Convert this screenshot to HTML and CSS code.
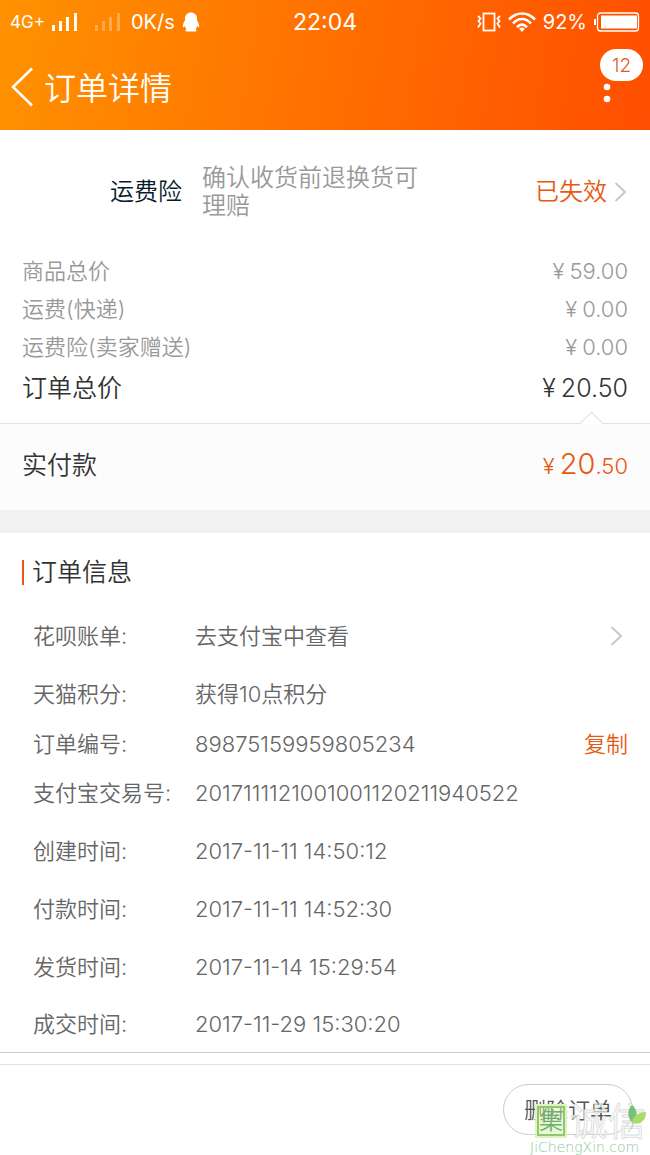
FILE: index.html
```html
<!DOCTYPE html>
<html lang="zh-CN">
<head>
    <meta charset="UTF-8">
    <meta name="viewport" content="width=device-width, initial-scale=1">
    <title>订单详情</title>
    <link rel="stylesheet" href="styles.css">
</head>
<body>
    <header class="header">
        <div class="status">
            <div class="status-left">
                <span class="network">4G+</span>
                <svg class="signal" width="26" height="20" viewBox="0 0 26 20" fill="#fff">
                    <path d="M0 13h3v6H0zM7 9h3v10H7zM14 5h3v14h-3zM22 1h3v18h-3z"/>
                </svg>
                <svg class="signal weak" width="26" height="20" viewBox="0 0 26 20" fill="#fff">
                    <path d="M0 13h3v6H0zM7 9h3v10H7zM14 5h3v14h-3zM22 1h3v18h-3z"/>
                </svg>
                <span class="speed">0K/s</span>
                <svg width="18" height="20" viewBox="0 0 18 20" fill="#fff">
                    <path d="M9 0.500C5.500 0.500 3 3 3 6.500V8.500C1.500 10.500 0.500 13 1 15C1.300 15.700 2.200 14.800 2.800 14C3.200 15.600 3.800 16.500 4.500 17.200C3 17.800 3 19.500 5 19.500H13C15 19.500 15 17.800 13.500 17.200C14.200 16.500 14.800 15.600 15.200 14C15.800 14.800 16.700 15.700 17 15C17.500 13 16.500 10.500 15 8.500V6.500C15 3 12.500 0.500 9 0.500Z"/>
                </svg>
            </div>
            <span class="clock">22:04</span>
            <div class="status-right">
                <svg width="24" height="20" viewBox="0 0 24 20" fill="none" stroke="#fff" stroke-width="1.800">
                    <rect x="6.500" y="1.500" width="11" height="17"/>
                    <path d="M1 4l2.500 2.500L1.500 9l2 2.500L1 15.500M23 4l-2.500 2.500L22.500 9l-2 2.500L23 15.500"/>
                </svg>
                <svg width="28" height="20" viewBox="0 0 28 20" fill="none" stroke="#fff" stroke-width="2.600">
                    <path d="M1 7.500C8.500-0.500 19.500-0.500 27 7.500M5 11.500C10.500 5.500 17.500 5.500 23 11.500M9 15.200C12.200 11.800 15.800 11.800 19 15.200"/>
                    <path d="M14 20l-3-3.500c2-1.500 4-1.500 6 0z" fill="#fff" stroke="none"/>
                </svg>
                <span>92%</span>
                <svg width="46" height="20" viewBox="0 0 46 20" fill="none" stroke="#fff">
                    <path d="M1 7v6" stroke-width="2"/>
                    <rect x="3.500" y="1" width="41" height="18" rx="3" stroke-width="1.300"/>
                    <rect x="7" y="3.500" width="36" height="13" fill="#fff" stroke="none"/>
                </svg>
            </div>
        </div>
        <div class="nav">
            <button class="back" aria-label="返回">
                <svg width="24" height="40" viewBox="0 0 24 40" fill="none" stroke="#fff" stroke-width="2.500">
                    <path d="M22 1.500L3 20l19 18.500"/>
                </svg>
            </button>
            <h1>订单详情</h1>
            <button class="more" aria-label="更多">
                <svg width="8" height="40" viewBox="0 0 8 40" fill="#fff">
                    <circle cx="4" cy="20" r="3.300"/>
                    <circle cx="4" cy="32" r="3.300"/>
                </svg>
                <span class="badge">12</span>
            </button>
        </div>
    </header>

    <main>
        <section class="insurance">
            <span class="insurance-name">运费险</span>
            <p>确认收货前退换货可理赔</p>
            <a class="expired" href="#">已失效
                <svg width="13" height="20" viewBox="0 0 13 20" fill="none" stroke="#c8c8c8" stroke-width="2">
                    <path d="M1.500 1L11 10l-9.500 9"/>
                </svg>
            </a>
        </section>

        <dl class="prices">
            <div><dt>商品总价</dt><dd><span class="yen">¥</span>59.00</dd></div>
            <div><dt>运费(快递)</dt><dd><span class="yen">¥</span>0.00</dd></div>
            <div><dt>运费险(卖家赠送)</dt><dd><span class="yen">¥</span>0.00</dd></div>
            <div class="total"><dt>订单总价</dt><dd><span class="yen">¥</span>20.50</dd></div>
        </dl>

        <section class="paid">
            <span>实付款</span>
            <span class="amount"><span class="yen">¥</span><b>20</b>.50</span>
        </section>

        <section class="info">
            <h2>订单信息</h2>
            <dl>
                <div>
                    <dt>花呗账单:</dt>
                    <dd>去支付宝中查看</dd>
                    <dd class="action">
                        <a class="arrow" href="#" aria-label="查看花呗账单">
                            <svg width="13" height="20" viewBox="0 0 13 20" fill="none" stroke="#c8c8c8" stroke-width="2">
                                <path d="M1.500 1L11 10l-9.500 9"/>
                            </svg>
                        </a>
                    </dd>
                </div>
                <div><dt>天猫积分:</dt><dd>获得10点积分</dd></div>
                <div class="short">
                    <dt>订单编号:</dt>
                    <dd>89875159959805234</dd>
                    <dd class="action"><button class="copy">复制</button></dd>
                </div>
                <div><dt>支付宝交易号:</dt><dd>2017111121001001120211940522</dd></div>
                <div><dt>创建时间:</dt><dd>2017-11-11 14:50:12</dd></div>
                <div><dt>付款时间:</dt><dd>2017-11-11 14:52:30</dd></div>
                <div><dt>发货时间:</dt><dd>2017-11-14 15:29:54</dd></div>
                <div><dt>成交时间:</dt><dd>2017-11-29 15:30:20</dd></div>
            </dl>
        </section>
    </main>

    <footer class="footer">
        <button class="delete">删除订单</button>
        <div class="watermark">
            <div class="mark-row">
                <span class="mark-box">集</span>
                <span class="mark-text">诚信</span>
            </div>
            <span class="mark-url">JiChengXin.com</span>
            <svg class="leaf" width="20" height="28" viewBox="0 0 20 28">
                <path d="M5 0C-1 6 1 14 6 18C11 12 11 5 5 0Z" fill="#78c178"/>
                <path d="M19 7C11 7 6 11 5 18C13 20 19 16 19 7Z" fill="#a9dc6c"/>
                <path d="M6 17C6 22 4 25 1 27" fill="none" stroke="#a5d8a0"/>
            </svg>
        </div>
    </footer>
</body>
</html>
```
FILE: styles.css
```css
* {
    box-sizing: border-box;
}
body {
    margin: 0;
    min-height: 100vh;
    display: flex;
    flex-direction: column;
    background: #fff;
    color: #666;
    font-family: Inter, "Noto Sans CJK SC", sans-serif;
    font-size: 22px;
    font-weight: 350;
    line-height: 30px;
}
h1, h2, p, dl, dd {
    margin: 0;
    font-weight: 350;
}
button {
    padding: 0;
    border: none;
    background: none;
    font: inherit;
    cursor: pointer;
}
a {
    color: inherit;
    text-decoration: none;
}
svg {
    display: block;
    flex: none;
}

/* header */
.header {
    height: 130px;
    background: linear-gradient(100deg, #ff9200, #ff4e00);
    color: #fff;
}
.status {
    height: 44px;
    padding: 0 10px;
    display: grid;
    grid-template-columns: 1fr auto 1fr;
    align-items: center;
    font-size: 20px;
    font-weight: 400;
}
.status-left, .status-right {
    display: flex;
    align-items: center;
}
.status-right {
    justify-content: flex-end;
    gap: 7px;
}
.network {
    font-size: 17px;
}
.signal {
    margin-left: 7px;
}
.weak {
    margin: 0 10px 0 17px;
    opacity: 0.3;
}
.speed {
    margin-right: 7px;
}
.clock {
    font-size: 23px;
}
.nav {
    height: 86px;
    padding: 0 39px 0 10px;
    display: flex;
    align-items: center;
}
.nav h1 {
    flex: 1;
    margin-left: 10px;
    padding-top: 3px;
    font-size: 32px;
    line-height: 40px;
}
.more {
    position: relative;
}
.badge {
    position: absolute;
    left: -3px;
    top: -18px;
    width: 43px;
    padding: 4px 0 2px;
    border-radius: 16px;
    background: #fff;
    color: #e0591d;
    font-size: 19px;
    line-height: 26px;
    text-align: center;
}

/* freight insurance */
.insurance {
    height: 122px;
    padding: 1px 23px 0 110px;
    display: flex;
    align-items: center;
    font-size: 24px;
    line-height: 28px;
}
.insurance-name {
    color: #051b28;
}
.insurance p {
    width: 220px;
    margin: 0 auto 0 20px;
    color: #999;
}
.expired {
    display: flex;
    align-items: center;
    gap: 7px;
    color: #e8580f;
}

/* prices */
.prices {
    padding: 0 22px 13px;
    color: #999;
}
.prices div {
    display: flex;
    justify-content: space-between;
    line-height: 38px;
}
.prices .total {
    color: #333;
    font-size: 25px;
    line-height: 44px;
}
.yen {
    margin-right: 5px;
}
.paid {
    position: relative;
    height: 87px;
    padding: 0 22px 4px;
    display: flex;
    justify-content: space-between;
    align-items: center;
    border-top: 1px solid #e2e2e2;
    background: #fcfcfc;
    color: #333;
    font-size: 25px;
}
.paid::before {
    content: "";
    position: absolute;
    right: 50px;
    top: -9px;
    width: 16px;
    height: 16px;
    border: solid #e2e2e2;
    border-width: 1px 0 0 1px;
    background: linear-gradient(135deg, #fff 50%, #fcfcfc 50%);
    transform: rotate(45deg);
}
.amount {
    color: #e8580f;
    font-size: 22px;
}
.amount b {
    font-size: 29px;
    font-weight: 350;
}

/* order info */
.info {
    border-top: 23px solid #f1f1f1;
}
.info h2 {
    margin: 27px 22px 22px;
    padding-left: 8px;
    border-left: 2px solid #e8580f;
    color: #333;
    font-size: 25px;
    line-height: 25px;
}
.info dl div {
    height: 58px;
    padding: 0 22px 0 33px;
    display: flex;
    align-items: center;
}
.info dl div:last-child {
    height: 56px;
}
.info dl .short {
    height: 41px;
}
.info dt {
    width: 162px;
}
.info .action {
    margin-left: auto;
}
.arrow {
    display: block;
    margin-right: 5px;
}
.copy {
    color: #e8580f;
}

/* footer */
.footer {
    position: relative;
    flex: 1;
    padding: 31px 17px 20px;
    display: flex;
    justify-content: flex-end;
    align-items: flex-start;
    border-top: 1px solid #ccc;
    background: linear-gradient(#e0e0e0, #e0e0e0) 0 11px / 100% 1px no-repeat;
}
.delete {
    width: 130px;
    height: 51px;
    border: 1px solid #ccc;
    border-radius: 26px;
    color: #555;
}
.watermark {
    position: absolute;
    right: 0;
    bottom: 0;
    width: 120px;
    pointer-events: none;
}
.mark-row {
    display: flex;
    align-items: center;
    gap: 5px;
    padding-left: 7px;
}
.mark-box {
    border: 2px solid #8fc96a;
    outline: 2px solid #dff3c0;
    background: rgba(215, 240, 180, 0.5);
    color: #6db06d;
    font-size: 24px;
    line-height: 26px;
}
.mark-text {
    color: rgba(255, 255, 255, 0.6);
    font-size: 38px;
    line-height: 38px;
    -webkit-text-stroke: 1px #ddd;
}
.mark-url {
    display: block;
    color: #8fc79a;
    font-family: "DejaVu Sans", sans-serif;
    font-size: 14px;
    line-height: 15px;
}
.leaf {
    position: absolute;
    right: 3px;
    top: 3px;
}
```
